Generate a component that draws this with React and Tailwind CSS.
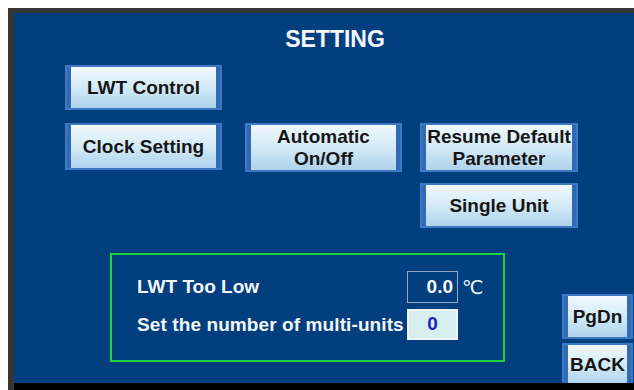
import React from 'react';

// glossy HMI style key
const Key = ({ className = '', children }) => (
  <div
    className={`flex items-stretch border-[2px] border-[#3d78c2] bg-gradient-to-r from-[#2f69b4] via-[#5d97d8] to-[#2f69b4] ${className}`}
  >
    <div className="mx-[4px] flex flex-1 flex-col items-center justify-center bg-gradient-to-b from-[#f0f9fd] via-[#d3eaf7] to-[#aed2ec] text-[19px] font-bold leading-[22px] text-[#161616] whitespace-nowrap">
      {children}
    </div>
  </div>
);

const App = () => {
  return (
    <div className="h-[390px] w-[634px] overflow-hidden bg-white pl-[8px] pt-[8px] font-['Liberation_Sans',Arial,sans-serif]">
      <div className="flex h-[382px] flex-col border-l-[6px] border-t-[5px] border-[#363636]">
        {/* main panel */}
        <div className="flex h-[370px] flex-col overflow-hidden bg-[#033f7e]">
          {/* Title */}
          <div className="mt-[12px] flex justify-center pl-[22px]">
            <h1 className="text-[23px] font-bold leading-[28px] text-[#f4f8fc]">SETTING</h1>
          </div>

          {/* Row 1 */}
          <div className="mt-[12px] flex pl-[51px]">
            <Key className="h-[45px] w-[157px]">LWT Control</Key>
          </div>

          {/* Row 2 */}
          <div className="mt-[13px] flex items-start pl-[51px]">
            <Key className="h-[47px] w-[157px]">Clock Setting</Key>
            <Key className="ml-[23px] h-[49px] w-[157px]">
              <span>Automatic</span>
              <span>On/Off</span>
            </Key>
            <Key className="ml-[18px] h-[49px] w-[158px]">
              <span>Resume Default</span>
              <span>Parameter</span>
            </Key>
          </div>

          {/* Row 3 */}
          <div className="mt-[11px] flex pl-[406px]">
            <Key className="h-[45px] w-[158px]">Single Unit</Key>
          </div>

          {/* Bottom area */}
          <div className="flex flex-1 items-start">
            <div className="ml-[96px] mt-[25px] flex h-[109px] w-[395px] flex-col gap-[6px] border-[2px] border-[#1fd13e] pl-[25px] pt-[16px]">
              <div className="flex items-center">
                <span className="w-[270px] shrink-0 whitespace-nowrap text-[19px] font-bold leading-[32px] text-[#f2f6fa]">LWT Too Low</span>
                <div className="flex h-[32px] w-[51px] shrink-0 items-center justify-end border-[1.5px] border-[#8fa9c7] pr-[4px] text-[19px] font-bold text-[#f6f9fc]">
                  0.0
                </div>
                <span className="ml-[4px] font-['DejaVu_Sans',sans-serif] text-[19px] text-[#f4f8fc]">℃</span>
              </div>
              <div className="flex items-center">
                <span className="w-[270px] shrink-0 whitespace-nowrap text-[19px] font-bold leading-[31px] tracking-[0.1px] text-[#f2f6fa]">Set the number of multi-units</span>
                <div className="flex h-[31px] w-[51px] shrink-0 items-center justify-center border-[2px] border-[#eef6f8] bg-[#d6eeee] text-[19px] font-bold text-[#1c1fc4]">
                  0
                </div>
              </div>
            </div>

            <div className="ml-auto mr-[1px] mt-[66px] flex w-[71px] flex-col gap-[4px]">
              <Key className="h-[45px] w-full">PgDn</Key>
              <Key className="h-[44px] w-full">BACK</Key>
            </div>
          </div>
        </div>
        {/* bottom black strip */}
        <div className="h-[7px] bg-black" />
      </div>
    </div>
  );
};

export default App;
